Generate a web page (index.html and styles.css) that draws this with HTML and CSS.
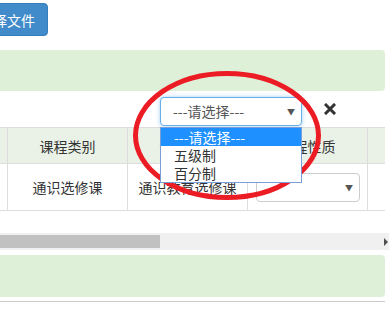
FILE: index.html
```html
<!DOCTYPE html>
<html lang="zh-CN">
<head>
    <meta charset="UTF-8">
    <meta name="viewport" content="width=device-width, initial-scale=1.0">
    <title>成绩导入</title>
    <link rel="stylesheet" href="styles.css">
</head>
<body>
    <div class="page">
        <div class="upload-bar">
            <button class="btn-primary">选择文件</button>
        </div>

        <div class="alert-success"></div>

        <!-- Score type filter, dropdown is open -->
        <div class="filter-bar">
            <div class="select-wrap">
                <div class="select select-focus">---请选择---<span class="caret">&#9660;</span></div>
                <ul class="dropdown">
                    <li class="active">---请选择---</li>
                    <li>五级制</li>
                    <li>百分制</li>
                </ul>
            </div>
            <span class="close-icon">
                <svg width="12" height="12" viewBox="0 0 12 12">
                    <path d="M2 2 L10 10 M10 2 L2 10" stroke="#333" stroke-width="3" stroke-linecap="square"></path>
                </svg>
            </span>
        </div>

        <div class="table-scroll">
            <table class="course-table">
                <colgroup>
                    <col class="col-first">
                    <col class="col-main">
                    <col class="col-main">
                    <col class="col-main">
                    <col class="col-main">
                </colgroup>
                <thead>
                    <tr>
                        <th></th>
                        <th>课程类别</th>
                        <th>课程名称</th>
                        <th>课程性质</th>
                        <th></th>
                    </tr>
                </thead>
                <tbody>
                    <tr>
                        <td></td>
                        <td>通识选修课</td>
                        <td>通识教育选修课</td>
                        <td><div class="select select-small"><span class="caret">&#9660;</span></div></td>
                        <td></td>
                    </tr>
                </tbody>
            </table>
        </div>

        <!-- horizontal scrollbar of the table -->
        <div class="scrollbar">
            <div class="scroll-thumb"></div>
            <span class="scroll-arrow"></span>
        </div>

        <div class="alert-success alert-bottom"></div>
        <div class="bottom-line"></div>
    </div>

    <svg class="mark" width="389" height="312" viewBox="0 0 389 312">
        <ellipse cx="227" cy="135.5" rx="91.5" ry="62" fill="none" stroke="#ec1c24" stroke-width="5"></ellipse>
    </svg>
</body>
</html>
```

FILE: styles.css
```css
body {
    margin: 0;
    padding: 0;
    font-family: "Noto Sans CJK SC", "Liberation Sans", sans-serif;
    font-size: 14px;
    color: #333;
    background-color: #fff;
    overflow: hidden;
}

.page {
    width: 415px;
    margin-left: -30px;
    padding-top: 3px;
}

.upload-bar {
    height: 33px;
}

.btn-primary {
    margin-left: -4px;
    height: 33px;
    padding: 0 12px;
    font-family: inherit;
    font-size: 14px;
    color: #fff;
    background-color: #428bca;
    border: 1px solid #357ebd;
    border-radius: 4px;
}

.alert-success {
    height: 41px;
    margin-top: 14px;
    background-color: #dff0d8;
    border-radius: 4px;
}

.filter-bar {
    display: flex;
    align-items: flex-start;
    height: 30px;
    padding-top: 6px;
    padding-left: 190px;
}

.select-wrap {
    position: relative;
}

.select {
    position: relative;
    box-sizing: border-box;
    height: 29px;
    line-height: 27px;
    padding-left: 12px;
    border: 1px solid #ccc;
    border-radius: 4px;
    background-color: #fff;
    color: #555;
}

.select-focus {
    width: 142px;
    border-color: #66afe9;
    box-shadow: 0 0 4px rgba(102, 175, 233, 0.6);
}

.caret {
    position: absolute;
    right: 6px;
    top: 0;
    font-size: 8px;
    color: #555;
}

.dropdown {
    position: absolute;
    left: 0;
    top: 30px;
    z-index: 5;
    width: 142px;
    box-sizing: border-box;
    margin: 0;
    padding: 0;
    list-style: none;
    background-color: #fff;
    border: 1px solid #7a9fd8;
}

.dropdown li {
    height: 18px;
    line-height: 18px;
    padding-left: 13px;
    color: #333;
}

.dropdown li.active {
    background-color: #1e90ff;
    color: #fff;
}

.close-icon {
    margin-left: 22px;
    margin-top: 2px;
}

.table-scroll {
    overflow: hidden;
    padding-bottom: 22px;
}

.course-table {
    border-collapse: collapse;
    table-layout: fixed;
    width: 517px;
}

.col-first {
    width: 37px;
}

.col-main {
    width: 120px;
}

.course-table th,
.course-table td {
    border: 1px solid #ddd;
    text-align: center;
    font-weight: normal;
    padding: 0;
}

.course-table th {
    height: 35px;
    background-color: #eaf2e8;
}

.course-table td {
    height: 46px;
}

.select-small {
    width: 104px;
    margin-left: 8px;
}

.scrollbar {
    position: relative;
    height: 17px;
    margin-left: 30px;
    width: 389px;
    background-color: #f0f0f0;
}

.scroll-thumb {
    position: absolute;
    left: 0;
    top: 2px;
    width: 160px;
    height: 13px;
    background-color: #c1c1c1;
}

.scroll-arrow {
    position: absolute;
    right: 1px;
    top: 5px;
    border-top: 4px solid transparent;
    border-bottom: 4px solid transparent;
    border-left: 4px solid #505050;
}

.alert-bottom {
    margin-top: 5px;
    height: 42px;
}

.bottom-line {
    margin-top: 4px;
    height: 1px;
    background-color: #ccc;
    box-shadow: 0 1px 2px rgba(0, 0, 0, 0.08);
}

.mark {
    position: absolute;
    left: 0;
    top: 0;
    pointer-events: none;
}
```
